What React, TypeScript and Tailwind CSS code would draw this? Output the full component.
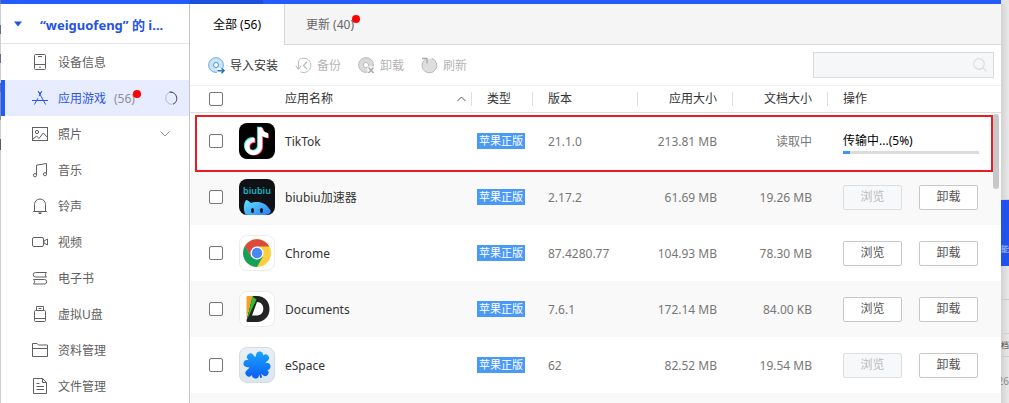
import React from "react";

type IconProps = { children: React.ReactNode; className?: string };

function LineIcon({ children, className = "text-[#606060]" }: IconProps) {
  return (
    <svg
      width="16"
      height="16"
      viewBox="0 0 16 16"
      fill="none"
      stroke="currentColor"
      strokeWidth="1"
      className={`shrink-0 ${className}`}
      aria-hidden="true"
    >
      {children}
    </svg>
  );
}

const icons: Record<string, React.ReactNode> = {
  device: (
    <>
      <rect x="2.5" y="0.5" width="11" height="15" rx="1" />
      <path d="M2.5 10.5h11M6 2.5h4M7 13.2h2" />
    </>
  ),
  apps: <path d="M6.3 1.2 13.6 14.5M9.7 1.2 7 6.2M6 8.2 2.4 14.5M0 10.5h16M6.3 1.2l1.7 3 1.7-3" />,
  photo: (
    <>
      <rect x="0.5" y="1.5" width="15" height="13" />
      <circle cx="5" cy="6" r="1.6" />
      <path d="M1 13l3.5-3 2.5 2.5L11.3 7 15 11" />
    </>
  ),
  music: (
    <>
      <path d="M4.5 13V3.2L14.5 1.5V12" />
      <circle cx="3" cy="13.2" r="1.6" />
      <circle cx="13" cy="12.2" r="1.6" />
    </>
  ),
  bell: (
    <>
      <path d="M2.5 13V6.5a5.5 5.5 0 0 1 11 0V13M1 13.5h14" />
      <path d="M6.5 15.2h3" strokeWidth="1.6" />
    </>
  ),
  video: (
    <>
      <rect x="0.5" y="3.5" width="11" height="9" rx="1.5" />
      <path d="M12 7l3.5-2v6L12 9z" />
    </>
  ),
  book: (
    <>
      <path d="M14.5 2.5H3.5a2 2 0 0 0 0 4.5h11c-1.5-1.5-1.5-3 0-4.5z" />
      <path d="M1.5 9.5h11a2.2 2.2 0 0 1 0 4.500h-11c1.5-1.5 1.5-3 0-4.500z" />
    </>
  ),
  usb: (
    <>
      <path d="M4.5 4V0.5h7V4M6.500 2.5h3" />
      <rect x="2.5" y="4.5" width="11" height="11" rx="1" />
      <path d="M2.5 12.5h11" />
    </>
  ),
  folder: <path d="M0.5 14.5v-13h4.5l1.5 1.5h9v11.5zM0.5 6.5h15" />,
  file: (
    <>
      <path d="M1.5 0.5h9l4 4v11h-13zM10.5 0.5v4h4" />
      <path d="M4.5 5.5h3M4.5 8.5h7.5M4.5 11.5h7.5" />
    </>
  ),
};

const navItems = [
  { icon: "device", label: "设备信息" },
  { icon: "apps", label: "应用游戏" },
  { icon: "photo", label: "照片" },
  { icon: "music", label: "音乐" },
  { icon: "bell", label: "铃声" },
  { icon: "video", label: "视频" },
  { icon: "book", label: "电子书" },
  { icon: "usb", label: "虚拟U盘" },
  { icon: "folder", label: "资料管理" },
  { icon: "file", label: "文件管理" },
];

function Spinner() {
  return (
    <svg width="14" height="14" viewBox="0 0 14 14" fill="none" aria-hidden="true">
      <path d="M7 0.7A6.300 6.300 0 0 0 7 13.300" stroke="#b4b8c6" />
      <path d="M4.500 1.200A6.300 6.300 0 0 1 8 13.200" stroke="#50535e" strokeWidth="1.100" />
    </svg>
  );
}

function Sidebar() {
  return (
    <aside className="flex w-[189px] shrink-0 flex-col border-r border-[#c6c6c6] bg-white">
      <button
        type="button"
        className="flex h-10 shrink-0 items-center border-b border-[#e4e4e4] pl-[13px] font-bold text-[#2452e6]"
      >
        <svg width="8" height="6" viewBox="0 0 8 6" aria-hidden="true">
          <path d="M0 0.500h8L4 5.500z" fill="currentColor" />
        </svg>
        <span className="ml-[18px] pt-[2px] text-[13px]">“weiguofeng” 的 i...</span>
      </button>
      <nav className="flex flex-col">
        {navItems.map((item) => {
          const active = item.icon === "apps";
          return (
            <a
              key={item.icon}
              href="#"
              className={`flex h-9 items-center gap-[10px] pr-[10px] ${
                active
                  ? "border-l-4 border-[#1f5bff] bg-[#e7ecff] pl-[27px] text-[#2a56e8]"
                  : "pl-[31px] text-[#606060]"
              }`}
            >
              <LineIcon className={active ? "text-[#2a56e8]" : "text-[#606060]"}>
                {icons[item.icon]}
              </LineIcon>
              <span className="pt-[2px]">{item.label}</span>
              {active && (
                <>
                  <span className="relative -ml-[2px] pt-[2px] text-[#8c8f98]">
                    (56)
                    <i className="absolute -right-[6px] top-px size-2 rounded-full bg-[#ff0000]" />
                  </span>
                  <span className="ml-auto">
                    <Spinner />
                  </span>
                </>
              )}
              {item.icon === "photo" && (
                <svg
                  width="10"
                  height="6"
                  viewBox="0 0 10 6"
                  fill="none"
                  stroke="#8e8e8e"
                  className="ml-auto mr-[9px]"
                  aria-hidden="true"
                >
                  <path d="M0.500 0.500 5 5l4.500-4.500" />
                </svg>
              )}
            </a>
          );
        })}
      </nav>
    </aside>
  );
}

const ImportIcon = (
  <svg width="17" height="17" viewBox="0 0 17 17" fill="none" aria-hidden="true">
    <circle cx="8" cy="8" r="7.400" fill="#c9e4fa" stroke="#6faee0" />
    <circle cx="8" cy="8" r="2.500" fill="#fff" stroke="#4c93d0" />
    <path d="M9 11h8v6H9z" fill="#fff" />
    <path d="M9.500 13.700h6.500M13.500 11.200l2.600 2.500-2.600 2.500" stroke="#1f74bd" strokeWidth="1.400" />
  </svg>
);
const BackupIcon = (
  <svg width="17" height="17" viewBox="0 0 17 17" fill="none" stroke="#bdbdbd" aria-hidden="true">
    <path d="M6.500 1.500A7.200 7.200 0 1 1 5.500 14.800M3.500 12V5C3.500 3.300 4.500 1.700 6.500 1.300M0.700 8.500l2.800 4 2.800-4" />
    <path d="M12 4.800 8.500 8.500l3.500 3.700" strokeWidth="1.300" />
  </svg>
);
const UninstallIcon = (
  <svg width="17" height="17" viewBox="0 0 17 17" fill="none" aria-hidden="true">
    <circle cx="8" cy="8" r="7.400" fill="#dadada" stroke="#bcbcbc" />
    <circle cx="8" cy="8" r="2.600" fill="#fff" stroke="#bcbcbc" />
    <path d="M9.500 9.500H17V17H9.500z" fill="#fff" />
    <path d="m10.500 10.500 5 5.500M15.500 10.500l-5 5.500" stroke="#a8a8a8" strokeWidth="1.500" />
  </svg>
);
const RefreshIcon = (
  <svg width="17" height="17" viewBox="0 0 17 17" fill="none" aria-hidden="true">
    <path d="M4 2.500A7.400 7.400 0 1 0 11 1.500" fill="#dedede" stroke="#b8b8b8" />
    <path d="M11 1.500 6.500 7 4 2.500z" fill="#dedede" />
    <path d="M1 1.500h5v5" stroke="#a8a8a8" strokeWidth="1.300" />
  </svg>
);

const tools = [
  { label: "导入安装", icon: ImportIcon, enabled: true },
  { label: "备份", icon: BackupIcon, enabled: false },
  { label: "卸载", icon: UninstallIcon, enabled: false },
  { label: "刷新", icon: RefreshIcon, enabled: false },
];

function TikTokIcon() {
  const note =
    "M18 5h4c.4 3.200 2.500 5.300 5.500 5.600v4.100c-2.100 0-4-.6-5.500-1.700v9.500c0 5-3.800 8.500-8.200 8.500-4.600 0-8.200-3.600-8.200-8.100 0-4.900 4.100-8.600 9.200-8v4.300c-2.700-.6-4.900 1.200-4.900 3.700 0 2.300 1.700 3.900 3.900 3.900 2.400 0 4.200-1.700 4.200-4.500z";
  return (
    <svg width="36" height="36" viewBox="0 0 36 36" aria-hidden="true">
      <rect width="36" height="36" rx="8" fill="#000" />
      <g transform="translate(-1 -1.200) scale(1.060)">
        <path d={note} fill="#25f4ee" transform="translate(0 -.4)" />
        <path d={note} fill="#fe2c55" transform="translate(1.700 .9)" />
        <path d={note} fill="#fff" transform="translate(.9 .3)" />
      </g>
    </svg>
  );
}

function BiubiuIcon() {
  return (
    <svg width="36" height="36" viewBox="0 0 36 36" aria-hidden="true">
      <defs>
        <linearGradient id="biu" x1="0" y1="0" x2="1" y2="1">
          <stop offset="0" stopColor="#5fe6ff" />
          <stop offset="1" stopColor="#2b7cf6" />
        </linearGradient>
      </defs>
      <rect width="36" height="36" rx="8" fill="#101114" />
      <text
        x="18"
        y="15"
        textAnchor="middle"
        fontFamily="Noto Sans, sans-serif"
        fontSize="9"
        fontWeight="600"
        fill="#18b4c8"
      >
        biubiu
      </text>
      <path
        d="M6.500 35.500C4 31 4.500 25 7 21c1.800.2 3.500 1.400 4.800 3 7-2.500 15-.5 18.200 5.500 1.300 1 2 2.300 1.600 3.700C30.500 35 28 36 26 36H9c-.9 0-1.700-.2-2.500-.5z"
        fill="url(#biu)"
      />
      <ellipse cx="13.500" cy="31.500" rx="1.500" ry="2.500" fill="#101114" />
      <ellipse cx="22.500" cy="31.500" rx="1.500" ry="2.500" fill="#101114" />
    </svg>
  );
}

function ChromeIcon() {
  return (
    <svg width="36" height="36" viewBox="0 0 36 36" aria-hidden="true">
      <rect x="0.500" y="0.500" width="35" height="35" rx="7.500" fill="#fff" stroke="#ececec" />
      <circle cx="18" cy="18" r="14" fill="#ffcd40" />
      <path d="M5.900 11A14 14 0 0 1 30.100 11.500H18L11.900 21.500z" fill="#db4a3e" />
      <path d="M5.900 11A14 14 0 0 0 18 32l6-10.500H12z" fill="#12a05c" />
      <circle cx="18" cy="18" r="6.500" fill="#fff" />
      <circle cx="18" cy="18" r="5.200" fill="#4688f4" />
    </svg>
  );
}

function DocumentsIcon() {
  return (
    <svg width="36" height="36" viewBox="0 0 36 36" aria-hidden="true">
      <rect x="0.500" y="0.500" width="35" height="35" rx="7.500" fill="#fff" stroke="#ececec" />
      <path
        fillRule="evenodd"
        d="M13 5h5c7.500 0 12.500 5.500 12.500 13S25 31 18 31H9c-1.300 0-1.800-1-1.300-2.200zM18 11l-5 13.500h4.500c4 0 6.800-2.500 6.800-6.800 0-3.900-2.500-6.700-6.300-6.700z"
        fill="#232323"
      />
      <path d="M9 5h5L7.500 27V6.500C7.500 5.600 8 5 9 5z" fill="#f6a02c" />
      <path d="M13.500 5.500 17.500 8.500 8 28.500z" fill="#2fbf2d" />
    </svg>
  );
}

function ESpaceIcon() {
  return (
    <svg width="36" height="36" viewBox="0 0 36 36" aria-hidden="true">
      <defs>
        <linearGradient id="leaf" gradientUnits="userSpaceOnUse" x1="0" y1="4" x2="0" y2="32">
          <stop offset="0" stopColor="#1ba5ff" />
          <stop offset="1" stopColor="#0b5cf2" />
        </linearGradient>
        <linearGradient id="leafBg" x1="0" y1="0" x2="0" y2="1">
          <stop offset="0" stopColor="#eaf0f5" />
          <stop offset="1" stopColor="#dbe5ee" />
        </linearGradient>
      </defs>
      <rect x="0.500" y="0.500" width="35" height="35" rx="7.500" fill="url(#leafBg)" stroke="#d5dce2" />
      <path
        d="M18 18 20.500 8M18 18l8.500-7M18 18l10 1.500M18 18l8 7.500M18 18l-1.500 10M18 18l-8 8M18 18 8 16.500M18 18l-6.500-8"
        stroke="url(#leaf)"
        strokeWidth="7"
        strokeLinecap="round"
        fill="none"
      />
      <path d="M20.500 22c0 3 .5 6 1.800 8.700" stroke="url(#leaf)" strokeWidth="2" fill="none" />
    </svg>
  );
}

type AppRow = {
  name: string;
  icon: React.ReactNode;
  version: string;
  size: string;
  docs: string;
  progress?: number;
  browse?: boolean;
};

const apps: AppRow[] = [
  { name: "TikTok", icon: <TikTokIcon />, version: "21.1.0", size: "213.81 MB", docs: "读取中", progress: 5 },
  { name: "biubiu加速器", icon: <BiubiuIcon />, version: "2.17.2", size: "61.69 MB", docs: "19.26 MB" },
  { name: "Chrome", icon: <ChromeIcon />, version: "87.4280.77", size: "104.93 MB", docs: "78.30 MB", browse: true },
  { name: "Documents", icon: <DocumentsIcon />, version: "7.6.1", size: "172.14 MB", docs: "84.00 KB", browse: true },
  { name: "eSpace", icon: <ESpaceIcon />, version: "62", size: "82.52 MB", docs: "19.54 MB" },
];

function Check({ label }: { label: string }) {
  return (
    <input
      type="checkbox"
      aria-label={label}
      className="block size-[14px] appearance-none rounded-[2px] border border-[#767676] bg-white checked:bg-[#1f5bff]"
    />
  );
}

const headCell = "flex h-[14px] items-center border-r border-[#dedede]";

function AppTable() {
  return (
    <table className="w-full table-fixed border-separate border-spacing-0">
      <colgroup>
        <col className="w-[49px]" />
        <col />
        <col className="w-[61px]" />
        <col className="w-[105px]" />
        <col className="w-[95px]" />
        <col className="w-[95px]" />
        <col className="w-[173px]" />
      </colgroup>
      <thead className="text-[#333]">
        <tr className="text-left [&>th]:h-[27px] [&>th]:border-b [&>th]:border-[#dedede] [&>th]:p-0 [&>th]:font-normal">
          <th>
            <div className="pl-[19px]">
              <Check label="全选" />
            </div>
          </th>
          <th>
            <div className={`${headCell} justify-between pl-[46px] pr-[5px]`}>
              应用名称
              <svg width="9" height="6" viewBox="0 0 9 6" fill="none" stroke="#555" aria-hidden="true">
                <path d="M0.500 5 4.500 1l4 4" />
              </svg>
            </div>
          </th>
          <th>
            <div className={`${headCell} pl-[15px]`}>类型</div>
          </th>
          <th>
            <div className={`${headCell} pl-[15px]`}>版本</div>
          </th>
          <th>
            <div className={`${headCell} justify-end pr-[15px]`}>应用大小</div>
          </th>
          <th>
            <div className={`${headCell} justify-end pr-[15px]`}>文档大小</div>
          </th>
          <th>
            <div className="pl-[15px]">操作</div>
          </th>
        </tr>
      </thead>
      <tbody className="text-[#777]">
        {apps.map((app) => (
          <tr key={app.name} className="h-14 even:bg-[#f9f9f9] [&>td]:p-0">
            <td>
              <div className="pl-[19px]">
                <Check label={app.name} />
              </div>
            </td>
            <td>
              <div className="flex items-center gap-[10px] text-[#333]">
                {app.icon}
                <span className="pt-[2px]">{app.name}</span>
              </div>
            </td>
            <td>
              <span className="ml-[5px] flex h-4 w-12 items-center justify-center whitespace-nowrap bg-[#4a9af5] text-[11px] text-white">
                苹果正版
              </span>
            </td>
            <td>
              <div className="pl-[15px] pt-[2px]">{app.version}</div>
            </td>
            <td>
              <div className="pr-4 pt-[2px] text-right">{app.size}</div>
            </td>
            <td>
              <div className="pr-4 pt-[2px] text-right">{app.docs}</div>
            </td>
            <td>
              {app.progress !== undefined ? (
                <div className="pl-[15px] pr-[22px] pt-1 text-black">
                  <div className="leading-4">传输中...({app.progress}%)</div>
                  <div
                    role="progressbar"
                    aria-valuenow={app.progress}
                    className="mt-[2px] h-[3px] bg-[#dcdcdc]"
                  >
                    <div className="h-full bg-[#3d96fb]" style={{ width: `${app.progress}%` }} />
                  </div>
                </div>
              ) : (
                <div className="flex gap-[17px] pl-[15px] text-[#555]">
                  <button
                    type="button"
                    disabled={!app.browse}
                    className="h-[25px] w-[59px] rounded-[2px] border border-[#c8c8c8] bg-white disabled:border-[#dcdfe2] disabled:bg-[#f6f8fa] disabled:text-[#bbb]"
                  >
                    浏览
                  </button>
                  <button
                    type="button"
                    className="h-[25px] w-[59px] rounded-[2px] border border-[#c8c8c8] bg-white"
                  >
                    卸载
                  </button>
                </div>
              )}
            </td>
          </tr>
        ))}
      </tbody>
      <tfoot>
        <tr className="h-14 bg-[#f9f9f9]">
          <td colSpan={7} />
        </tr>
      </tfoot>
    </table>
  );
}

function BackdropEdge() {
  return (
    <div className="flex w-2 shrink-0 flex-col overflow-hidden bg-linear-to-r from-[#d2d2d2] to-[#e9e9e9] text-[8px]">
      <div className="h-[196px] shrink-0 border-b border-[#cfcfcf]" />
      <div className="flex h-[66px] shrink-0 items-end justify-end bg-[#2152ea] pb-[9px] leading-4 text-[#b8c9ff]">
        能
      </div>
      <div className="h-[34px] shrink-0 border-b border-[#cbcbcb]" />
      <div className="h-[34px] shrink-0 border-b border-[#d0d0d0]" />
      <div className="flex h-[23px] shrink-0 items-center justify-end border-b border-[#cbcbcb] text-[#444]">
        档
      </div>
      <div className="flex h-12 shrink-0 items-center justify-end text-[10px] text-[#888]">26</div>
    </div>
  );
}

export default function App() {
  return (
    <div className="flex h-screen flex-col overflow-hidden bg-[#e4e4e4] font-['Noto_Sans','Noto_Sans_CJK_SC',sans-serif] text-[12px] leading-4">
      <div className="flex min-h-0 flex-1">
        <div className="flex w-px shrink-0 flex-col bg-[#cfcfcf]">
          <div className="h-1 bg-[#777]" />
          <div className="mt-[21px] h-[9px] bg-[#67679a]" />
          <div className="mt-5 h-[9px] bg-[#67679a]" />
          <div className="mt-5 h-[9px] bg-[#67679a]" />
          <div className="h-7 bg-[#8d8d8d]" />
          <div className="mt-[19px] h-[11px] bg-[#5c5c5c]" />
        </div>
        <div className="flex min-w-0 flex-1">
          <div className="flex min-w-0 flex-1 flex-col">
            <div className="flex h-1 shrink-0 bg-[#245bff]">
              <div className="ml-[189px] w-[73px] bg-[#1d4fdd]" />
            </div>
            <div className="flex min-h-0 flex-1">
              <Sidebar />
              <main className="flex min-w-0 flex-1 flex-col bg-white">
                <div className="flex h-[41px] shrink-0 bg-[#f5f5f5]">
                  <button type="button" className="w-[95px] border-r border-[#d8d8d8] bg-white text-black">
                    全部 (56)
                  </button>
                  <div className="flex flex-1 border-b border-[#d8d8d8] pl-[21px]">
                    <button type="button" className="relative pt-px text-[#666]">
                      更新 (40)
                      <i className="absolute -right-[6px] top-[11px] size-2 rounded-full bg-[#ff0000]" />
                    </button>
                  </div>
                </div>
                <div className="flex h-[41px] shrink-0 items-center gap-[17px] border-b border-[#f0f0f0] pl-[18px] pr-[7px]">
                  {tools.map((tool) => (
                    <button
                      key={tool.label}
                      type="button"
                      disabled={!tool.enabled}
                      className="flex items-center gap-[5px] text-[#333] disabled:text-[#b4b4b4]"
                    >
                      {tool.icon}
                      <span className="pt-px">{tool.label}</span>
                    </button>
                  ))}
                  <label className="ml-auto flex h-[26px] w-[181px] items-center border border-[#dadada] bg-[#f6f7f9] pr-[6px]">
                    <input type="search" aria-label="搜索" className="min-w-0 flex-1 bg-transparent px-2 outline-none" />
                    <svg width="14" height="14" viewBox="0 0 14 14" fill="none" stroke="#dcdee0" strokeWidth="1.200" aria-hidden="true">
                      <circle cx="6" cy="6" r="5.300" />
                      <path d="m10 10 3.500 3.500" />
                    </svg>
                  </label>
                </div>
                <div className="relative min-h-0 flex-1 overflow-hidden">
                  <AppTable />
                  <div className="pointer-events-none absolute left-[5px] right-2 top-[29px] h-[57px] border-2 border-[#e71d24]" />
                  <div className="absolute right-[2px] top-7 h-[75px] w-[6px] rounded-full bg-[#c8c8c8]" />
                </div>
              </main>
            </div>
          </div>
          <div className="flex pt-1">
            <BackdropEdge />
          </div>
        </div>
      </div>
    </div>
  );
}
